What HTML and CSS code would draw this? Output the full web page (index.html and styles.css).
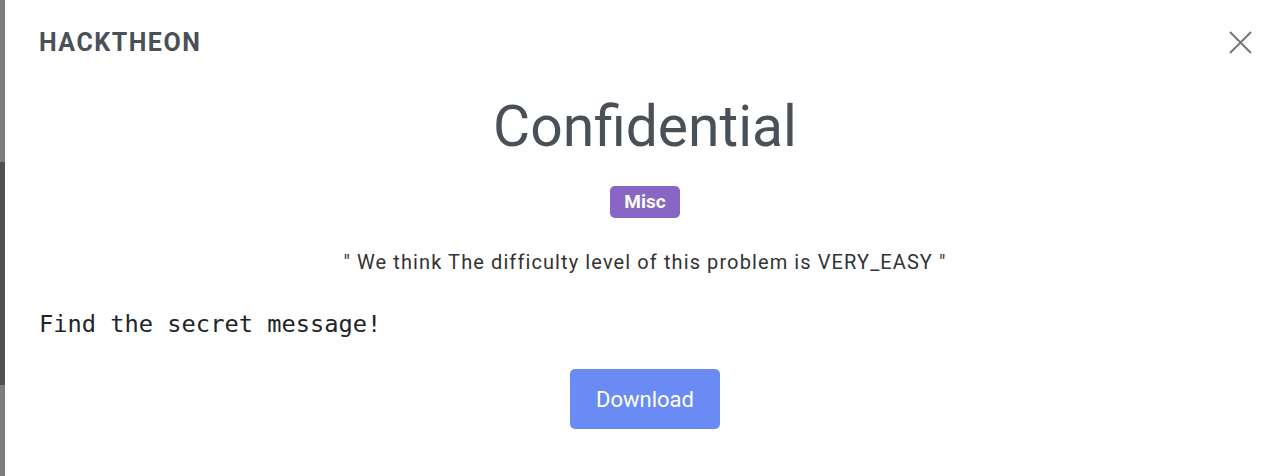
FILE: index.html
```html
<!DOCTYPE html>
<html lang="en">
<head>
    <meta charset="UTF-8">
    <meta name="viewport" content="width=device-width, initial-scale=1.0">
    <title>HACKTHEON - Confidential</title>
    <link rel="stylesheet" href="styles.css">
</head>
<body>
    <div class="edge">
        <div class="edge-top"></div>
        <div class="edge-dark"></div>
        <div class="edge-bottom"></div>
    </div>
    <div class="modal">
        <div class="modal-header">
            <h5 class="brand">HACKTHEON</h5>
            <button class="close" aria-label="Close">
                <svg width="23" height="23" viewBox="0 0 23 23">
                    <path d="M1 1 L22 22 M22 1 L1 22" stroke="#74777a" stroke-width="2" fill="none"/>
                </svg>
            </button>
        </div>
        <div class="modal-body">
            <h1 class="title">Confidential</h1>
            <span class="badge">Misc</span>
            <p class="level">" We think The difficulty level of this problem is VERY_EASY "</p>
            <pre class="desc">Find the secret message!</pre>
            <div class="actions">
                <button class="download">Download</button>
            </div>
        </div>
    </div>
</body>
</html>
```

FILE: styles.css
```css
html, body {
    height: 100%;
}

body {
    margin: 0;
    display: flex;
    font-family: Roboto, "Noto Sans", sans-serif;
    color: #495057;
    background: #fff;
    overflow: hidden;
}

.edge {
    width: 5px;
    display: flex;
    flex-direction: column;
}

.edge-top {
    height: 162px;
    background: #7d7d7d;
}

.edge-dark {
    height: 223px;
    background: #4f5152;
}

.edge-bottom {
    flex: 1;
    background: #7d7d7d;
}

.modal {
    flex: 1;
    background: #fff;
    padding: 0 20px 0 34px;
}

.modal-header {
    display: flex;
    justify-content: space-between;
    align-items: center;
    height: 84px;
}

.brand {
    margin: 0;
    font-size: 25px;
    font-weight: 700;
    letter-spacing: 1.5px;
    color: #495057;
}

.close {
    border: 0;
    background: none;
    padding: 0;
    width: 23px;
    height: 23px;
    margin-right: -1px;
    cursor: pointer;
}

.modal-body {
    display: flex;
    flex-direction: column;
    align-items: center;
}

.title {
    margin: 0;
    font-size: 57px;
    font-weight: 400;
    line-height: 86px;
    color: #495057;
}

.badge {
    margin-top: 16px;
    background: #8766c5;
    color: #fff;
    font-size: 19px;
    font-weight: 700;
    line-height: 32px;
    padding: 0 14px;
    border-radius: 5px;
}

.level {
    margin: 32px 0 0;
    font-size: 20px;
    letter-spacing: 1.1px;
    color: #333;
}

.desc {
    align-self: stretch;
    margin: 36px 0 0;
    font-family: "DejaVu Sans Mono", monospace;
    font-size: 23.7px;
    color: #212529;
}

.actions {
    margin-top: 31px;
}

.download {
    border: 0;
    width: 150px;
    height: 60px;
    border-radius: 5px;
    background: #6a8bf3;
    color: #fff;
    font-family: Roboto, "Noto Sans", sans-serif;
    font-size: 22px;
    cursor: pointer;
}
```
